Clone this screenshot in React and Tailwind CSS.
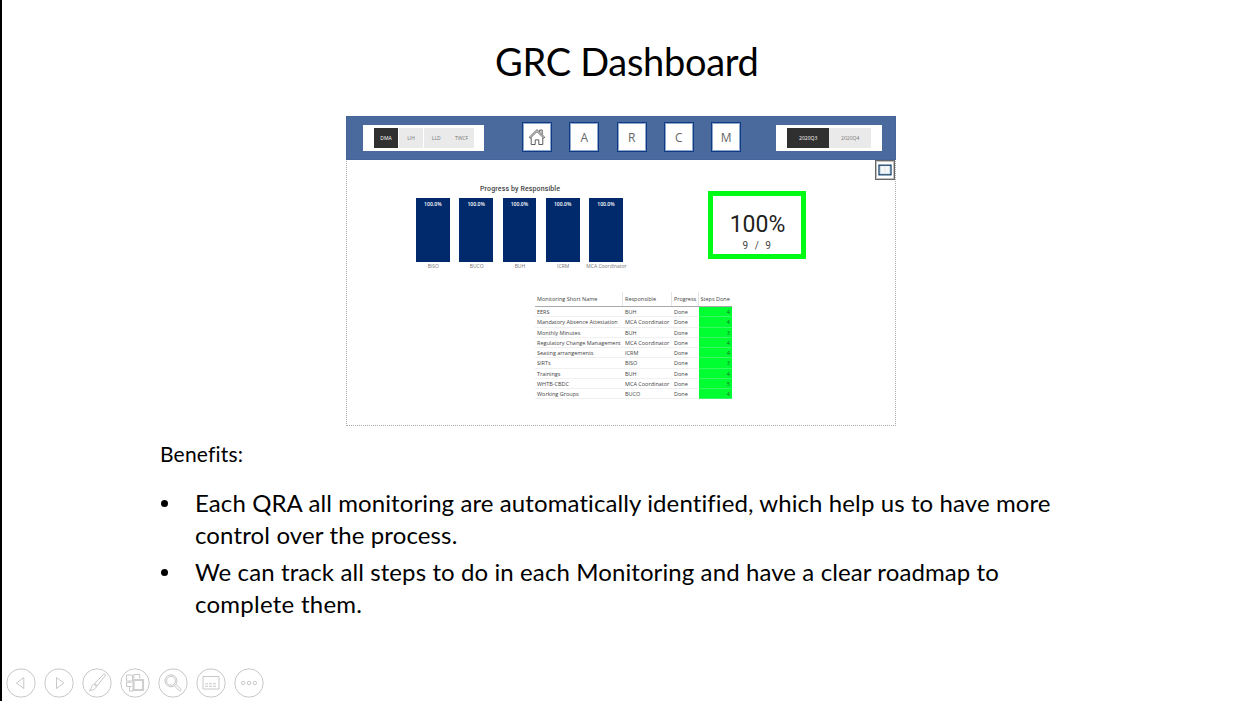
import React from "react";

const entities = ["DMA", "LIH", "LLD", "TWCF"];
const pages = ["A", "R", "C", "M"];
const bars = ["BISO", "BUCO", "BUH", "ICRM", "MCA Coordinator"];
const rows = [
  ["EERS", "BUH", "4"],
  ["Mandatory Absence Attestation", "MCA Coordinator", "4"],
  ["Monthly Minutes", "BUH", "3"],
  ["Regulatory Change Management", "MCA Coordinator", "4"],
  ["Seating arrangements", "ICRM", "4"],
  ["SIRTs", "BISO", "3"],
  ["Trainings", "BUH", "4"],
  ["WHTB-CBDC", "MCA Coordinator", "5"],
  ["Working Groups", "BUCO", "4"],
];

function NavButton({ children }) {
  return (
    <div className="flex h-[30px] w-[30px] items-center justify-center border border-[#0d3b85] bg-white pt-px text-[12px] text-[#666] ring-1 ring-inset ring-[#8fa6ca]">
      {children}
    </div>
  );
}

function HomeIcon() {
  return (
    <svg className="-mt-px" width="18" height="18" viewBox="0 0 18 18" fill="none" stroke="#4a4a4a" strokeWidth="0.9">
      <path d="M1.200 9.300 9 1.600l7.800 7.700-1 .9L9 3.600l-6.800 6.600z" />
      <path d="M3.200 9.500v7h4v-4.600h3.600v4.600h4v-7" />
      <path d="M11.800 4V2h2.400v4.400" />
    </svg>
  );
}

function Dashboard() {
  return (
    <section className="flex h-[310px] w-[550px] flex-col border-x border-b border-dotted border-[#aaa] bg-white font-['Open_Sans',sans-serif]">
      <header className="-mx-px flex h-[44px] w-[550px] shrink-0 items-start border border-[#44659a] bg-[#4a699c] pl-[15.500px] pt-[5px]">
        <div className="mt-[3px] flex h-[26px] w-[121.500px] bg-white pl-[11px] pt-[3px] text-[5px] leading-[21px]">
          {entities.map((e, i) => (
            <div
              key={e}
              className={
                "mr-[0.4px] h-[19.5px] w-[24.8px] text-center " +
                (i === 0 ? "bg-[#303030] text-white" : "bg-[#eaeaea] text-[#777]")
              }
            >
              {e}
            </div>
          ))}
        </div>
        <nav className="ml-[38px] flex gap-[17.3px]">
          <NavButton><HomeIcon /></NavButton>
          {pages.map((p) => (
            <NavButton key={p}>{p}</NavButton>
          ))}
        </nav>
        <div className="ml-[35px] mt-[3px] flex h-[26px] w-[105.5px] bg-white pl-[11px] pt-[3px] text-center text-[5px] leading-[21px]">
          <div className="h-[19.5px] w-[42px] bg-[#303030] text-white">2020Q3</div>
          <div className="h-[19.5px] w-[42px] bg-[#eaeaea] text-[#777]">2020Q4</div>
        </div>
      </header>
      <div className="flex h-[20px] shrink-0 justify-end">
        <div className="flex h-[20px] w-[20px] items-center justify-center border border-[#666] bg-white ring-1 ring-inset ring-[#c0c0c0]">
          <svg className="shrink-0" width="14" height="12" viewBox="0 0 14 12" fill="none">
            <rect x="1" y="1.200" width="12" height="9.600" fill="#f5f6f7" stroke="#173f68" strokeWidth="1.300" />
            <path d="M2.100 2v7.400M11.900 2v7.400M2 9.900h4.500l.5.500.5-.5H12" stroke="#56a0cf" strokeWidth=".4" />
            <path d="M7 1.800v8" stroke="#d8dee3" strokeWidth=".6" />
          </svg>
        </div>
      </div>
      <div className="flex h-[106px] shrink-0">
        <div className="ml-[69px] mt-[3px] w-[215px]">
          <h2 className="ml-[64px] h-[15px] whitespace-nowrap pt-px font-[Roboto,sans-serif] text-[7px] font-medium leading-[11px] tracking-[0.12px] text-[#444]">
            Progress by Responsible
          </h2>
          <div className="flex gap-[9.6px]">
            {bars.map((b) => (
              <div key={b} className="flex w-[33.7px] flex-col items-center">
                <div className="h-[64px] w-full bg-[#002a6c] pt-[1px] text-center text-[5.1px] font-semibold leading-[10px] text-white">
                  100.0%
                </div>
                <div className="whitespace-nowrap pl-[1px] text-[5px] leading-[9px] text-[#777]">{b}</div>
              </div>
            ))}
          </div>
        </div>
        <div className="ml-[77px] mt-[11px] flex h-[68px] w-[98px] flex-col items-center border-[5px] border-[#00fb14] bg-white font-[Roboto,sans-serif]">
          <div className="mt-[17px] pl-px text-[23px] leading-[24px] text-[#222]">100%</div>
          <div className="mt-[3px] whitespace-pre text-[10px] leading-[12px] tracking-[0.5px] text-[#444]">9  /  9</div>
        </div>
      </div>
      <div className="ml-[188px] mt-[6px] w-[197px] shrink-0 text-[5.5px] text-[#444]">
        <div className="grid h-[15px] grid-cols-[88px_49px_26.5px_33.5px] border-b border-[#aaa] leading-[14px] whitespace-nowrap">
          <div className="border-r border-[#e4e4e4] pl-[2px]">Monitoring Short Name</div>
          <div className="border-r border-[#e4e4e4] pl-[2px]">Responsible</div>
          <div className="border-r border-[#e4e4e4] pl-[2px] tracking-[-0.05px]">Progress</div>
          <div className="pl-[2px]">Steps Done</div>
        </div>
        {rows.map(([name, who, steps]) => (
          <div
            key={name}
            className="grid h-[10.25px] grid-cols-[88px_49px_26.5px_33.5px] leading-[11.6px] whitespace-nowrap"
          >
            <div className="h-[10.25px] border-b border-[#f0f0f0] pl-[2px]">{name}</div>
            <div className="h-[10.25px] border-b border-[#f0f0f0] pl-[2px]">{who}</div>
            <div className="h-[10.25px] border-b border-[#f0f0f0] pl-[2px]">Done</div>
            <div className="h-[10.25px] border-b border-[#38f868] bg-[#00ff30] pr-[2px] text-right text-[#176b2b]">{steps}</div>
          </div>
        ))}
      </div>
    </section>
  );
}

const controls = [
  <path key="prev" d="M17.800 9.500v11l-7.300-5.500z" />,
  <path key="next" d="M12.500 9.500v11l7.300-5.500z" />,
  <g key="pen">
    <path d="M12.500 15.500 21.700 6.200q1.600-.7 1.900 1l-8.400 10.700zM12.500 15.500l2.700 2.400M11.800 16.200l2.700 2.500q-1.500 3.500-7.200 4 2.400-1.600 2.300-4 .6-2 2.200-2.500z" />
  </g>,
  <g key="slides">
    <path d="M6.500 7h6v6h-6zM13.800 10.500V6.500h6v4M11.500 18.500h-5v-4.200h5" />
    <path d="M9.500 19v4h4" />
    <path d="M13.500 12h9.500v10h-9.500z" strokeWidth="2.200" stroke="#cfcfcf" />
  </g>,
  <g key="zoom">
    <circle cx="13" cy="12.800" r="6" />
    <circle cx="13" cy="12.800" r="4.500" />
    <path d="m16.200 17.800 5.300 5q1.800.3 1.600-1.500l-5.300-5" />
  </g>,
  <g key="captions">
    <path d="M7 8.500h16v12.500H7z" />
    <path d="M9 15.800h12M9 18.300h12" strokeDasharray="3 1" />
  </g>,
  <g key="more">
    <circle cx="9.200" cy="15" r="1.700" />
    <circle cx="15" cy="15" r="1.700" />
    <circle cx="20.800" cy="15" r="1.700" />
  </g>,
];

function Bullet() {
  return (
    <span className="w-[35px] pl-px pt-[13px]">
      <span className="block size-[7px] rounded-full bg-black" />
    </span>
  );
}

export default function App() {
  return (
    <main className="flex h-[701px] w-[1251px] flex-col overflow-hidden border-l-2 border-black bg-white font-[Lato,sans-serif] text-black">
      <h1 className="ml-[493px] mt-[37px] h-[79px] whitespace-nowrap text-[38px] leading-[48px] tracking-[-0.3px]">GRC Dashboard</h1>
      <div className="ml-[344px]">
        <Dashboard />
      </div>
      <div className="ml-[158px] mt-[13px] h-[243px] whitespace-nowrap">
        <p className="text-[21px] leading-[30px] tracking-[0.2px]">Benefits:</p>
        <ul className="mt-[18px] text-[24px] leading-[32px] tracking-[0.1px]">
          <li className="flex">
            <Bullet />
            <div>
              <p>Each QRA all monitoring are automatically identified, which help us to have more</p>
              <p className="tracking-[0.13px]">control over the process.</p>
            </div>
          </li>
          <li className="mt-[5px] flex">
            <Bullet />
            <div>
              <p>We can track all steps to do in each Monitoring and have a clear roadmap to</p>
              <p className="tracking-[0.25px]">complete them.</p>
            </div>
          </li>
        </ul>
      </div>
      <footer className="ml-[4px] mt-[-14px] flex gap-[8px]">
        {controls.map((c, i) => (
          <svg key={i} width="30" height="30" viewBox="0 0 30 30" fill="none" stroke="#c8c8c8" strokeWidth="1">
            <circle cx="15" cy="15" r="14.200" />
            {c}
          </svg>
        ))}
      </footer>
    </main>
  );
}
